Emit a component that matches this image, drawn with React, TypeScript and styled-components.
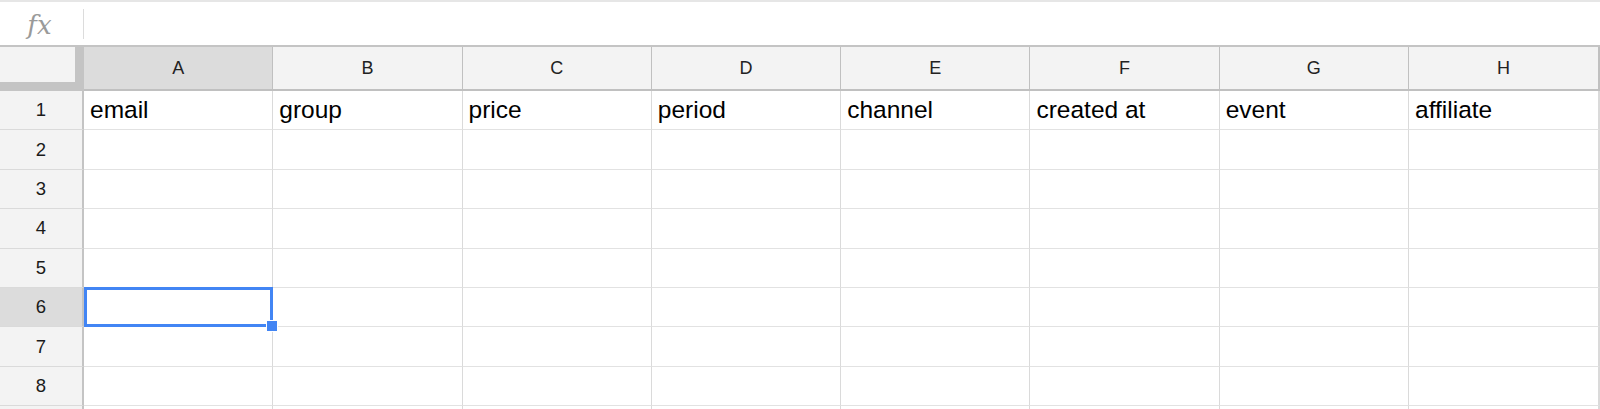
import { Fragment } from 'react';
import styled, { createGlobalStyle } from 'styled-components';

const GlobalStyle = createGlobalStyle`
  html, body {
    margin: 0;
    padding: 0;
    height: 409px;
    overflow: hidden;
    background: #fff;
    font-family: "Liberation Sans", Arial, sans-serif;
  }
`;

const columns = ['A', 'B', 'C', 'D', 'E', 'F', 'G', 'H'];
const headers = ['email', 'group', 'price', 'period', 'channel', 'created at', 'event', 'affiliate'];
// row 9 only peeks in at the bottom edge, so it shows no number
const rowCount = 9;
const visibleRows = 8;
const selected = { row: 6, col: 0 };

const FormulaBar = styled.div`
  height: 43px;
  border-top: 2px solid #e6e6e6;
  border-bottom: 2px solid #c4c4c4;
  display: flex;
  align-items: center;
`;

const FxLabel = styled.div`
  width: 83px;
  display: flex;
  justify-content: center;
  align-items: center;
  align-self: stretch;
`;

const FxText = styled.span`
  font-family: "DejaVu Serif", "Liberation Serif", serif;
  font-style: italic;
  font-size: 26px;
  letter-spacing: 0;
  color: #9a9a9a;
  margin: 2px 4px 0 0;
`;

const Divider = styled.div`
  width: 1px;
  height: 30px;
  background: #dcdcdc;
`;

const Sheet = styled.div`
  display: grid;
  width: 1600px;
  grid-template-columns: 84px repeat(7, 1fr) 191px;
  grid-template-rows: 44px;
  grid-auto-rows: 39.4px;
`;

const Corner = styled.div`
  background: #f3f3f3;
  border-right: 9px solid #c4c4c4;
  border-bottom: 9px solid #c4c4c4;
`;

const ColHeader = styled.div<{ $active?: boolean; $last?: boolean }>`
  background: ${({ $active }) => ($active ? '#dcdcdc' : '#f3f3f3')};
  border-right: ${({ $last }) => ($last ? 2 : 1)}px solid #c0c0c0;
  border-bottom: 2px solid #c0c0c0;
  display: flex;
  align-items: center;
  justify-content: center;
  font-size: 18px;
  color: #222;
`;

const RowHeader = styled.div<{ $active?: boolean }>`
  background: ${({ $active }) => ($active ? '#dcdcdc' : '#f3f3f3')};
  border-right: 2px solid #c4c4c4;
  border-bottom: 1px solid #dadada;
  display: flex;
  align-items: center;
  justify-content: center;
  font-size: 18.5px;
  color: #1a1a1a;
`;

const Cell = styled.div<{ $last?: boolean; $selected?: boolean }>`
  position: relative;
  z-index: ${({ $selected }) => ($selected ? 2 : 'auto')};
  background: #fff;
  border-right: ${({ $last }) => ($last ? 2 : 1)}px solid #dadada;
  border-bottom: 1px solid #e2e2e2;
  display: flex;
  align-items: flex-end;
  padding: 0 6px 5px;
  font-size: 24.5px;
  color: #000;
  white-space: nowrap;
`;

const Selection = styled.div`
  position: absolute;
  top: -1px;
  left: 0;
  right: -1px;
  bottom: -1px;
  border: 3px solid #4285f4;
  pointer-events: none;
`;

const Handle = styled.div`
  position: absolute;
  right: -8px;
  bottom: -8px;
  width: 10px;
  height: 10px;
  background: #4285f4;
  border: 1px solid #fff;
`;

export default function App() {
  const rows = Array.from({ length: rowCount }, (_, i) => i + 1);
  return (
    <>
      <GlobalStyle />
      <FormulaBar>
        <FxLabel>
          <FxText>fx</FxText>
        </FxLabel>
        <Divider />
      </FormulaBar>
      <Sheet>
        <Corner />
        {columns.map((c, i) => (
          <ColHeader key={c} $active={i === selected.col} $last={i === columns.length - 1}>
            {c}
          </ColHeader>
        ))}
        {rows.map((r) => (
          <Fragment key={r}>
            <RowHeader $active={r === selected.row}>{r <= visibleRows ? r : ''}</RowHeader>
            {columns.map((c, i) => {
              const isSel = r === selected.row && i === selected.col;
              return (
                <Cell key={c} $last={i === columns.length - 1} $selected={isSel}>
                  {r === 1 ? headers[i] : ''}
                  {isSel && (
                    <Selection>
                      <Handle />
                    </Selection>
                  )}
                </Cell>
              );
            })}
          </Fragment>
        ))}
      </Sheet>
    </>
  );
}
